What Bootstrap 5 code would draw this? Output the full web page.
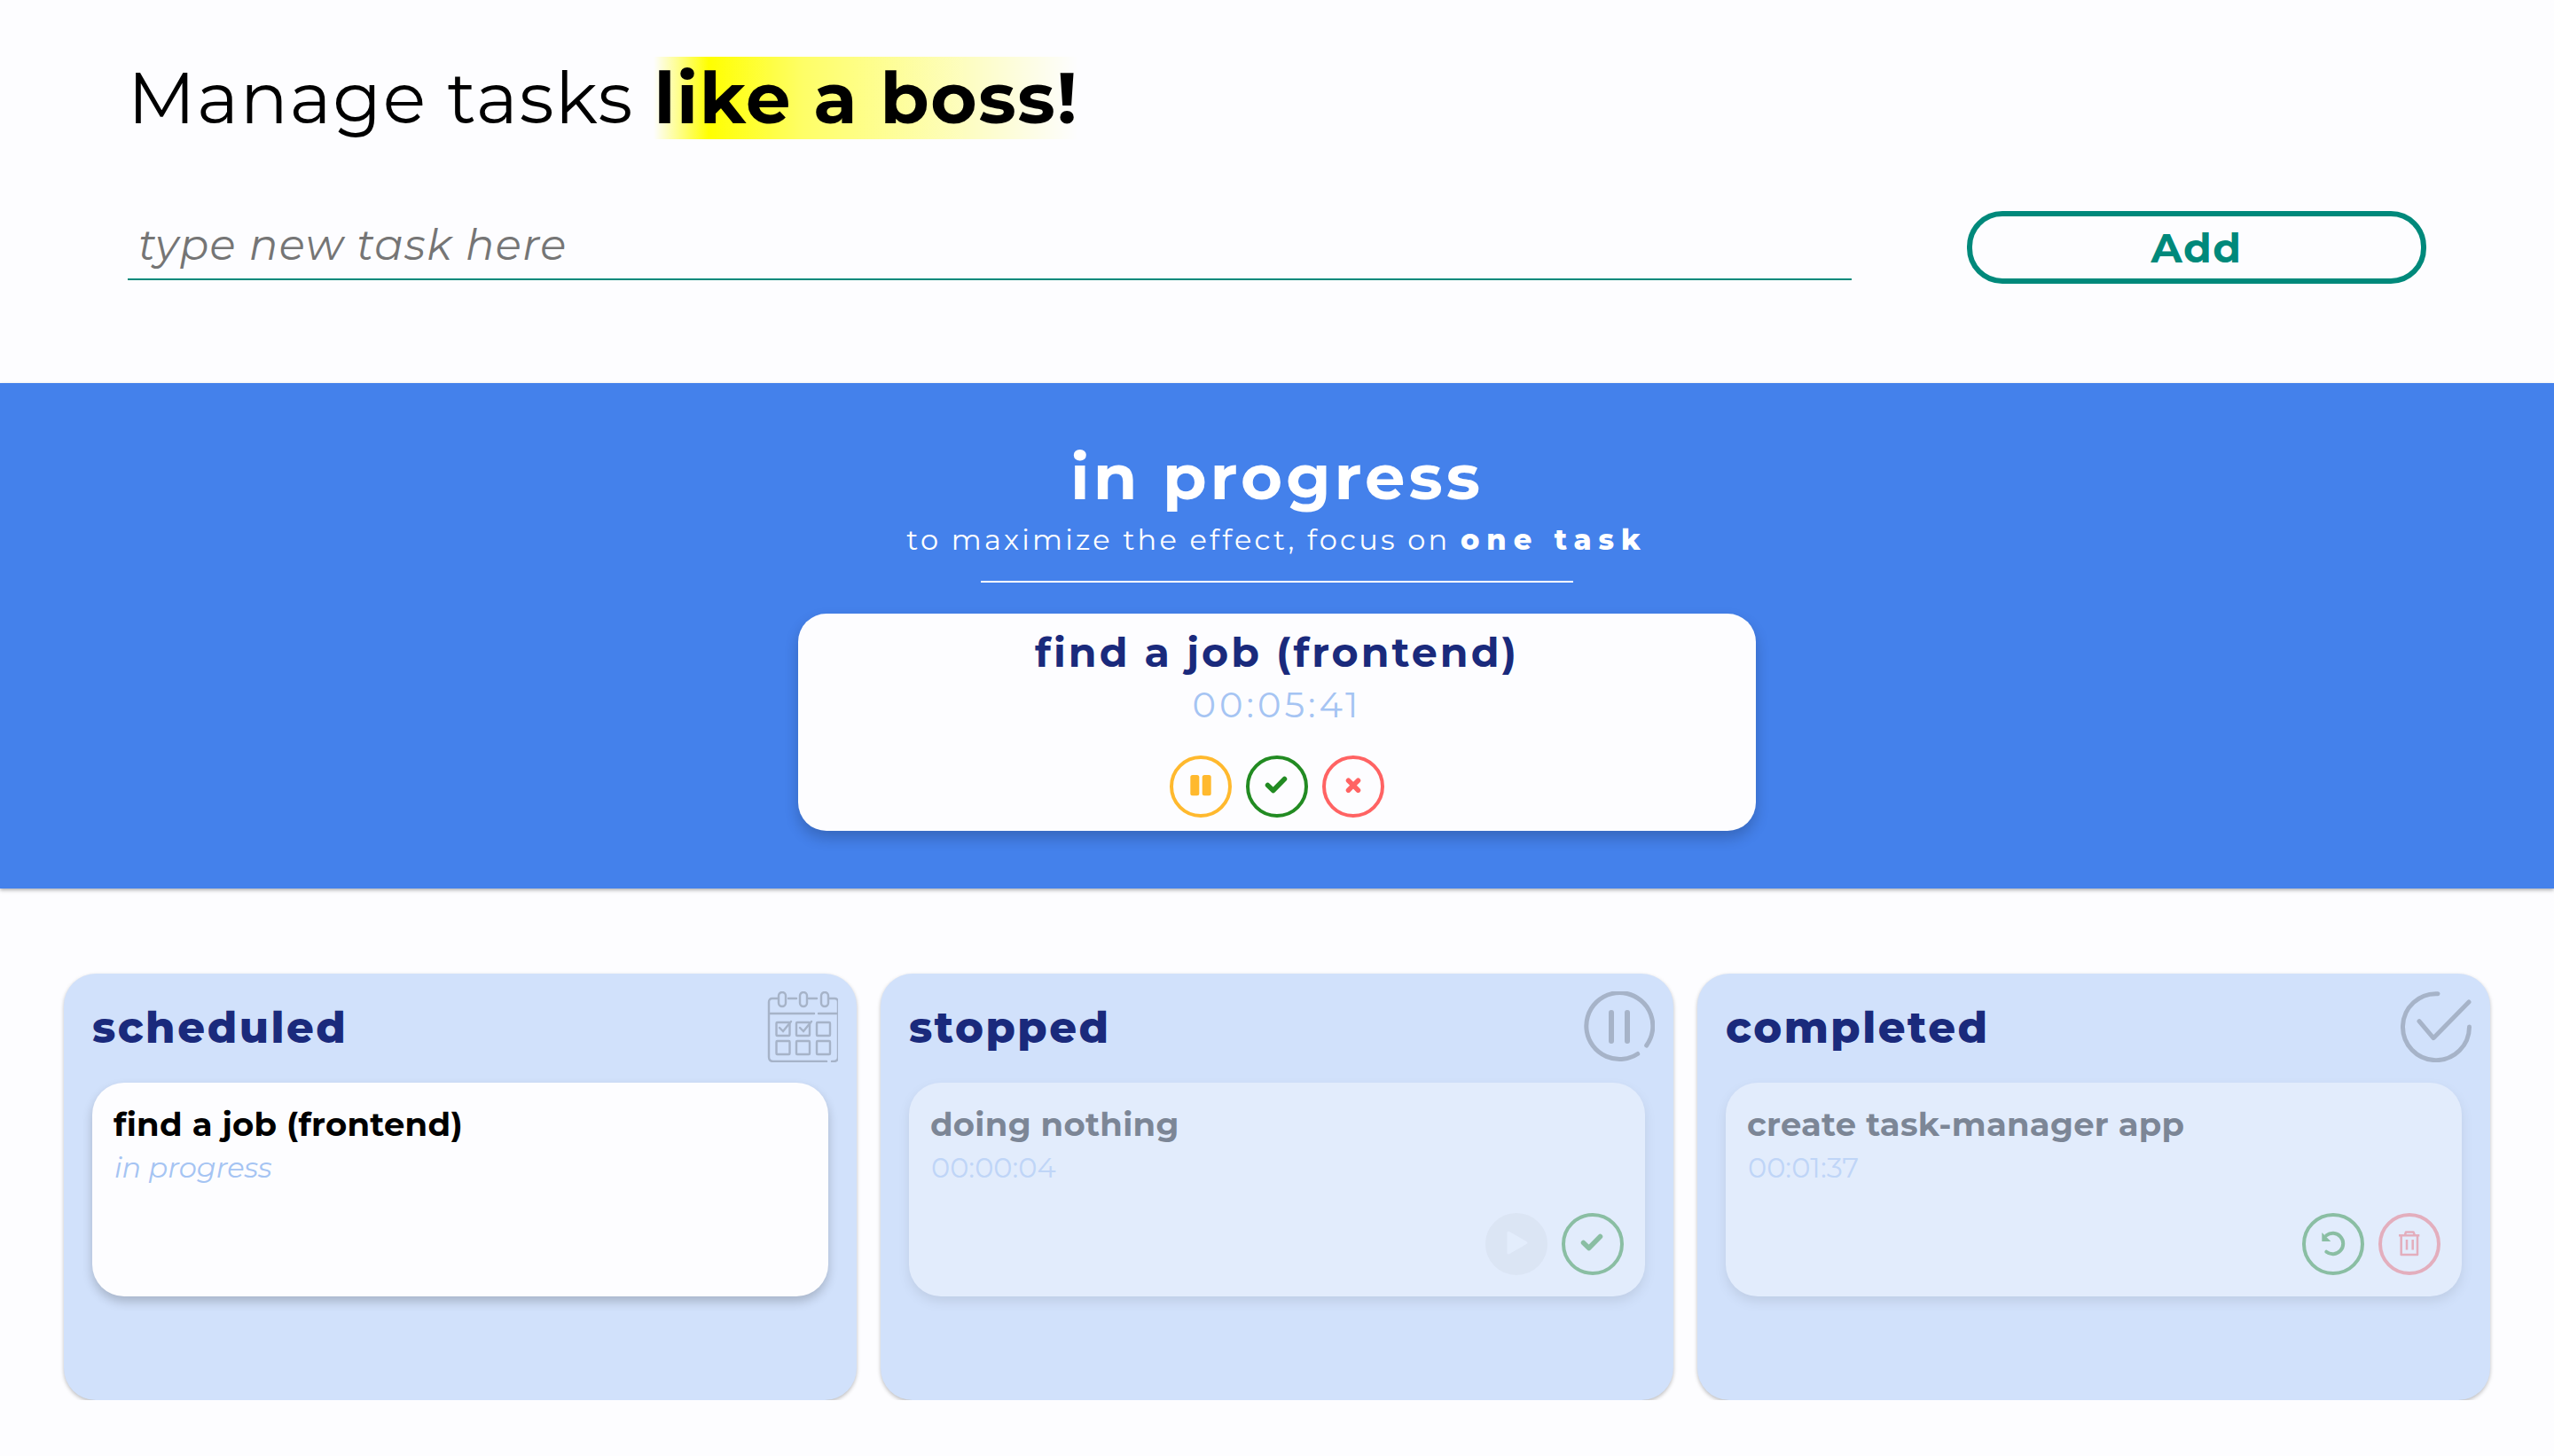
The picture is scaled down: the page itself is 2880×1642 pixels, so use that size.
<!DOCTYPE html>
<html lang="en">
<head>
    <meta charset="UTF-8">
    <title>Task manager</title>
    <link rel="stylesheet" href="https://cdn.jsdelivr.net/npm/bootstrap@5.3.0/dist/css/bootstrap.min.css">
    <style>
        body { font-family: "Montserrat", "Inter", "Open Sans", sans-serif; background: #fdfdff; color: #000; }

        /* top form */
        .top-area { height: 432px; padding: 64px 144px 0 144px; }
        .main-title { font-size: 80px; line-height: 93px; font-weight: 400; letter-spacing: .02em; margin: 0 0 81px; }
        .main-title b { display: inline-block; font-weight: 700; letter-spacing: .02em; background: linear-gradient(90deg, rgba(255,255,0,0) 0%, #ff0 13%, rgba(255,255,0,.6) 35%, rgba(255,255,0,0) 100%); }
        .form-row { gap: 130px; }
        .task-input.form-control { height: 78px; flex: 1; padding: 0 12px; font-size: 48px; font-style: italic; letter-spacing: 1.4px; background: transparent; border: 0; border-bottom: 2px solid #00897b; border-radius: 0; box-shadow: none; }
        .task-input::placeholder { color: #757575; }
        .add-btn.btn { width: 518px; height: 82px; padding: 0; font-size: 46px; font-weight: 700; letter-spacing: 1.5px; color: #00897b; background: transparent; border: 6px solid #00897b; border-radius: 40px; }

        /* blue band */
        .band { height: 570px; padding-top: 69px; background: #4481eb; box-shadow: 0 2px 4px rgba(0,0,0,.3); color: #fff; }
        .band-title { font-size: 72px; line-height: 72px; font-weight: 700; letter-spacing: 4px; margin: 0; }
        .band-sub { font-size: 32px; line-height: 40px; letter-spacing: 3.2px; margin: 16px 0 0; }
        .band-sub b { font-weight: 800; letter-spacing: 8px; }
        .band-line { width: 668px; height: 2px; margin: 26px auto 35px; background: #fff; }
        .focus-card { width: 1080px; height: 245px; padding-top: 14px; background: #fdfdff; border-radius: 32px; box-shadow: 0 8px 16px rgba(0,0,0,.2); }
        .focus-name { font-size: 46px; line-height: 60px; font-weight: 700; letter-spacing: 3px; color: #1a2a7c; margin: 0 0 4px; }
        .focus-time { font-size: 40px; line-height: 50px; font-weight: 400; letter-spacing: 4px; color: #a5c4f3; margin-bottom: 32px; }

        /* round buttons */
        .act-btn { width: 70px; height: 70px; padding: 0; background: transparent; border: 4px solid; border-radius: 50%; flex: none; }
        .act-btn svg { display: block; width: 62px; height: 62px; }
        .c-yellow { color: #ffb92e; border-color: #ffb92e; }
        .c-green { color: #228b22; border-color: #228b22; }
        .c-red { color: #ff6363; border-color: #ff6363; }
        .c-off { color: #fff; background: #ebebeb; border-color: #ebebeb; }

        /* columns */
        .board { padding: 96px 72px 0; gap: 27px; }
        .lane { position: relative; flex: 1 1 0; height: 481px; padding: 0 32px; background: #d1e1fb; border-radius: 36px; box-shadow: 0 2px 4px rgba(0,0,0,.25); }
        .lane-title { height: 123px; margin: 0; font-size: 48px; line-height: 123px; font-weight: 800; letter-spacing: 2.5px; color: #1a2a7c; }
        .lane-icon { position: absolute; top: 20px; right: 21px; width: 80px; height: 80px; opacity: .2; }
        .task-card { height: 241px; padding: 22px 24px 24px; background: #fdfdff; border-radius: 36px; box-shadow: 0 6px 12px rgba(0,0,0,.2); }
        .task-card.is-off { opacity: .4; }
        .task-name { font-size: 37px; line-height: 50px; font-weight: 700; letter-spacing: .25px; margin: 0; }
        .task-info { font-size: 32px; line-height: 40px; color: #a5c4f3; margin: 4px 0 0 1px; }
    </style>
</head>
<body>

    <div class="top-area">
        <h1 class="main-title">Manage tasks <b>like a boss!</b></h1>
        <div class="d-flex align-items-start form-row">
            <input type="text" class="form-control task-input" placeholder="type new task here">
            <button type="button" class="btn add-btn">Add</button>
        </div>
    </div>

    <section class="band text-center">
        <h2 class="band-title">in progress</h2>
        <p class="band-sub">to maximize the effect, focus on <b>one task</b></p>
        <div class="band-line"></div>
        <div class="focus-card mx-auto">
            <h3 class="focus-name">find a job (frontend)</h3>
            <div class="focus-time">00:05:41</div>
            <div class="d-flex justify-content-center gap-3">
                <button type="button" class="act-btn c-yellow">
                    <svg viewBox="4 4 62 62"><rect x="23.3" y="22" width="10" height="23.3" rx="2.5" fill="currentColor"/><rect x="36.7" y="22" width="10" height="23.3" rx="2.5" fill="currentColor"/></svg>
                </button>
                <button type="button" class="act-btn c-green">
                    <svg viewBox="4 4 62 62"><path d="M24.5 33.5 30.7 39.5 43.5 26.5" fill="none" stroke="currentColor" stroke-width="5.5" stroke-linecap="round" stroke-linejoin="round"/></svg>
                </button>
                <button type="button" class="act-btn c-red">
                    <svg viewBox="4 4 62 62"><path d="M29.5 28.2 40.5 39.2M40.5 28.2 29.5 39.2" fill="none" stroke="currentColor" stroke-width="5.5" stroke-linecap="round"/></svg>
                </button>
            </div>
        </div>
    </section>

    <div class="board d-flex">
        <div class="lane">
            <h4 class="lane-title">scheduled</h4>
            <svg class="lane-icon" viewBox="-1 0 80 80" fill="none" stroke="#000" stroke-width="2.4" stroke-linecap="round">
                <path d="M11 8H5Q1 8 1 12V74Q1 79 6 79H66M72 79H74Q79 79 79 74V12Q79 8 75 8H69M55 8H46M32 8H23M1 25H52M57 25H79"/>
                <rect x="12" y="1" width="8" height="16" rx="4"/><rect x="36" y="1" width="8" height="16" rx="4"/><rect x="60" y="1" width="8" height="16" rx="4"/>
                <rect x="9.5" y="35" width="15" height="15" rx="1"/><rect x="32" y="35" width="15" height="15" rx="1"/><rect x="55" y="35" width="15" height="15" rx="1"/>
                <rect x="9.5" y="56" width="15" height="15" rx="1"/><rect x="32" y="56" width="15" height="15" rx="1"/><rect x="55" y="56" width="15" height="15" rx="1"/>
                <path d="M13 41 17 45 26 34M36 41 40 45 49 34"/>
            </svg>
            <div class="task-card">
                <h5 class="task-name">find a job (frontend)</h5>
                <div class="task-info fst-italic">in progress</div>
            </div>
        </div>

        <div class="lane">
            <h4 class="lane-title">stopped</h4>
            <svg class="lane-icon" viewBox="0 0 80 80" fill="none" stroke="#000" stroke-width="5" stroke-linecap="round">
                <path d="M70.7 61A37.5 37.5 0 1 0 60.7 70.5"/><path d="M31 24V56M49 24V56" stroke-width="6"/>
            </svg>
            <div class="task-card is-off d-flex flex-column">
                <h5 class="task-name">doing nothing</h5>
                <div class="task-info">00:00:04</div>
                <div class="d-flex justify-content-end gap-3 mt-auto">
                    <button type="button" class="act-btn c-off">
                        <svg viewBox="4 4 62 62"><path d="M26 22 46 33.5 26 45Z" fill="currentColor" stroke="currentColor" stroke-width="3" stroke-linejoin="round"/></svg>
                    </button>
                    <button type="button" class="act-btn c-green">
                        <svg viewBox="4 4 62 62"><path d="M24.5 33.5 30.7 39.5 43.5 26.5" fill="none" stroke="currentColor" stroke-width="5.5" stroke-linecap="round" stroke-linejoin="round"/></svg>
                    </button>
                </div>
            </div>
        </div>

        <div class="lane">
            <h4 class="lane-title">completed</h4>
            <svg class="lane-icon" viewBox="0 0 80 80" fill="none" stroke="#000" stroke-width="5" stroke-linecap="round" stroke-linejoin="round">
                <path d="M42 2.7A37.5 37.5 0 1 0 77.5 40"/><path d="M21 33.7 37 52.7 77 12"/>
            </svg>
            <div class="task-card is-off d-flex flex-column">
                <h5 class="task-name">create task-manager app</h5>
                <div class="task-info">00:01:37</div>
                <div class="d-flex justify-content-end gap-3 mt-auto">
                    <button type="button" class="act-btn c-green">
                        <svg viewBox="4 4 62 62"><path d="M27.3 25.3A11.7 11.7 0 1 1 27.3 43.7" fill="none" stroke="currentColor" stroke-width="4" stroke-linecap="round"/><path d="M22.3 22V32H32.3Z" fill="currentColor"/></svg>
                    </button>
                    <button type="button" class="act-btn c-red">
                        <svg viewBox="4 4 62 62" fill="none" stroke="currentColor" stroke-width="2.5" stroke-linejoin="round"><path d="M23 25.3H46.3M29.7 25.3 31 21.5H39.5L41 25.3M25.7 25.3V47H44V25.3M32 30V41.5M38.7 30V41.5"/></svg>
                    </button>
                </div>
            </div>
        </div>
    </div>

    <script src="https://cdn.jsdelivr.net/npm/bootstrap@5.3.0/dist/js/bootstrap.bundle.min.js"></script>
</body>
</html>
